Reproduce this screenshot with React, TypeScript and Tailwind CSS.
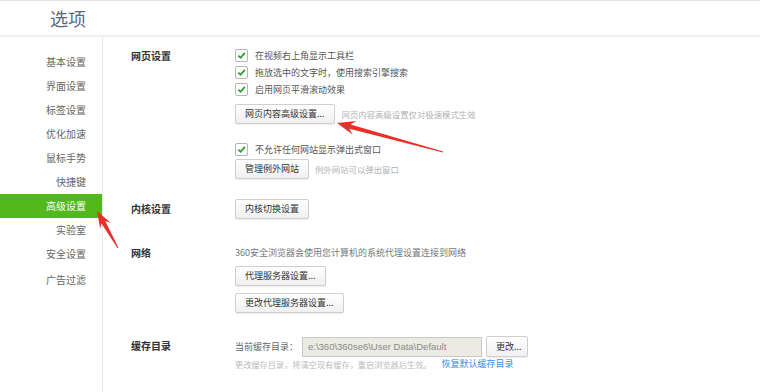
const navItems = ["基本设置", "界面设置", "标签设置", "优化加速", "鼠标手势", "快捷键", "高级设置", "实验室", "安全设置", "广告过滤"];

const font = "font-['Noto_Sans_CJK_SC','Microsoft_YaHei',sans-serif]";

function Btn({ children, className = "" }: { children: React.ReactNode; className?: string }) {
  return (
    <button className={`h-[20px] shrink-0 whitespace-nowrap rounded-[2px] border border-[#cfcfcf] bg-gradient-to-b from-white to-[#f0f0f0] px-[9px] text-[9px] leading-[18px] text-[#333] shadow-[0_1px_1px_rgba(0,0,0,0.08)] ${className}`}>
      {children}
    </button>
  );
}

function Check({ label }: { label: string }) {
  return (
    <div className="flex h-[17px] items-center">
      <span className="flex h-[13px] w-[13px] items-center justify-center rounded-[2px] border border-[#b5b5b5] bg-white">
        <svg width="9" height="9" viewBox="0 0 9 9">
          <path d="M1.3 4.6 L3.6 6.8 L7.8 1.8" fill="none" stroke="#2a9f2a" strokeWidth="1.8" />
        </svg>
      </span>
      <span className="ml-[7px] text-[9px] text-[#555]">{label}</span>
    </div>
  );
}

function arrowPoints(x1: number, y1: number, x2: number, y2: number, headLen: number, headW: number, neckW: number, tailW: number) {
  const len = Math.hypot(x2 - x1, y2 - y1);
  const dx = (x2 - x1) / len;
  const dy = (y2 - y1) / len;
  const nx = -dy;
  const ny = dx;
  const at = (back: number, side: number) => [x2 - dx * back + nx * side, y2 - dy * back + ny * side];
  const pts = [
    [x1 + (nx * tailW) / 2, y1 + (ny * tailW) / 2],
    at(headLen * 0.75, neckW / 2),
    at(headLen, headW / 2),
    [x2, y2],
    at(headLen, -headW / 2),
    at(headLen * 0.75, -neckW / 2),
    [x1 - (nx * tailW) / 2, y1 - (ny * tailW) / 2],
  ];
  return pts.map((p) => p.map((v) => v.toFixed(1)).join(",")).join(" ");
}

export default function App() {
  return (
    <div className={`relative h-[392px] w-[760px] overflow-hidden bg-white ${font}`}>
      <div className="flex h-[37px] items-center border-t border-b-2 border-t-[#e2e2e2] border-b-[#efefef] pl-[50px]">
        <h1 className="text-[18px] leading-none text-[#5b6977]">选项</h1>
      </div>

      <div className="flex h-[355px]">
        <nav className="w-[103px] shrink-0 border-r border-[#e6e6e6] pt-[13px]">
          {navItems.map((item, i) => (
            <div
              key={item}
              className={`h-[24px] pr-[16px] text-right text-[10px] leading-[24px] ${i === 6 ? "bg-[#52b81c] text-white" : "text-[#666]"} ${i === 9 ? "mt-[2px]" : ""}`}
            >
              {item}
            </div>
          ))}
        </nav>

        <main className="flex-1 pl-[28px] pt-[10px]">
          <section className="flex">
            <h2 className="w-[104px] text-[10px] font-bold leading-[17px] text-[#333]">网页设置</h2>
            <div>
              <Check label="在视频右上角显示工具栏" />
              <Check label="拖放选中的文字时，使用搜索引擎搜索" />
              <Check label="启用网页平滑滚动效果" />
              <div className="mt-[6px] flex items-center">
                <Btn>网页内容高级设置...</Btn>
                <span className="ml-[7px] text-[8.4px] text-[#b3b3b3]">网页内容高级设置仅对极速模式生效</span>
              </div>
              <div className="mt-[17px]">
                <Check label="不允许任何网站显示弹出式窗口" />
              </div>
              <div className="mt-[1px] flex items-center">
                <Btn>管理例外网站</Btn>
                <span className="ml-[6px] text-[8.4px] text-[#b3b3b3]">例外网站可以弹出窗口</span>
              </div>
            </div>
          </section>

          <section className="mt-[20px] flex">
            <h2 className="w-[104px] text-[10px] font-bold leading-[20px] text-[#333]">内核设置</h2>
            <Btn>内核切换设置</Btn>
          </section>

          <section className="mt-[25px] flex">
            <h2 className="w-[104px] text-[10px] font-bold leading-[17px] text-[#333]">网络</h2>
            <div className="flex flex-col items-start">
              <p className="text-[9px] leading-[17px] text-[#777]">360安全浏览器会使用您计算机的系统代理设置连接到网络</p>
              <Btn className="mt-[5px]">代理服务器设置...</Btn>
              <Btn className="mt-[7px]">更改代理服务器设置...</Btn>
            </div>
          </section>

          <section className="mt-[23px] flex">
            <h2 className="w-[104px] text-[10px] font-bold leading-[20px] text-[#333]">缓存目录</h2>
            <div>
              <div className="flex items-center">
                <span className="w-[67px] text-[9px] text-[#666]">当前缓存目录：</span>
                <div className="h-[20px] w-[180px] border border-[#c8c8c8] bg-[#ebebe4] pl-[5px] font-['Liberation_Sans',sans-serif] text-[9.5px] leading-[18px] text-[#8a8a8a]">
                  e:\360\360se6\User Data\Default
                </div>
                <Btn className="ml-[4px] h-[21px] w-[42px] px-0">更改...</Btn>
              </div>
              <div className="flex h-[14px] items-center">
                <span className="text-[8.2px] text-[#bdbdbd]">更改缓存目录，将清空现有缓存，重启浏览器后生效。</span>
                <a className="ml-[10px] text-[9px] text-[#3b8de4]">恢复默认缓存目录</a>
              </div>
            </div>
          </section>
        </main>
      </div>

      <svg className="pointer-events-none absolute left-0 top-0" width="760" height="392">
        <polygon points={arrowPoints(443, 152, 337, 123, 18, 14, 4.5, 1)} fill="#e8302a" />
        <polygon points={arrowPoints(118, 248, 97, 211, 17, 12, 4.5, 1)} fill="#e8302a" />
      </svg>
    </div>
  );
}
